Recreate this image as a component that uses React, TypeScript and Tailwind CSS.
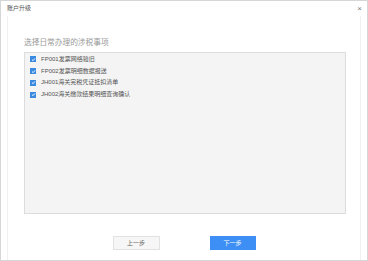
const items = [
  "FP001发票网络验旧",
  "FP002发票明细数据报送",
  "JH001海关完税凭证抵扣清单",
  "JH002海关缴款结果明细查询确认",
];

const Check = () => (
  <span className="flex h-[6px] w-[6px] items-center justify-center bg-[#3a8be0]">
    <svg viewBox="0 0 10 10" className="h-[5px] w-[5px]" fill="none">
      <path d="M2 5.2 L4.2 7.3 L8.2 2.8" stroke="#fff" strokeWidth="1.8" />
    </svg>
  </span>
);

export default function App() {
  return (
    <div
      className="flex h-[261px] w-[368px] flex-col border border-[#d6d6d6] bg-white"
      style={{ fontFamily: '"Liberation Sans", "Noto Sans CJK SC", sans-serif' }}
    >
      <div className="flex h-[15px] shrink-0 items-center justify-between pl-[6px] pr-[5px] text-[6px] text-[#555]">
        <span>账户升级</span>
        <span className="text-[8px] leading-none text-[#777]">×</span>
      </div>
      <div className="mx-[6px] flex flex-1 flex-col border-x border-[#f0f0f0] pl-[16px] pt-[22px]">
        <div className="h-[10px] text-[7.7px] leading-[10px] text-[#999]">选择日常办理的涉税事项</div>
        <div className="mt-[4px] h-[162px] w-[322px] border border-[#dcdcdc] bg-[#f4f4f4] pt-[0.5px]">
          {items.map((t) => (
            <div key={t} className="flex h-[11.8px] items-center gap-[5px] pl-[5px] text-[6px] text-[#555]">
              <Check />
              <span>{t}</span>
            </div>
          ))}
        </div>
        <div className="mt-[22px] flex justify-center gap-[50px] pr-[16px]">
          <button className="h-[14px] w-[47px] border border-[#e2e2e2] bg-[#f6f6f6] text-[6px] text-[#666]">
            上一步
          </button>
          <button className="h-[14px] w-[46px] bg-[#3d8ff5] text-[6px] text-white">下一步</button>
        </div>
      </div>
    </div>
  );
}
